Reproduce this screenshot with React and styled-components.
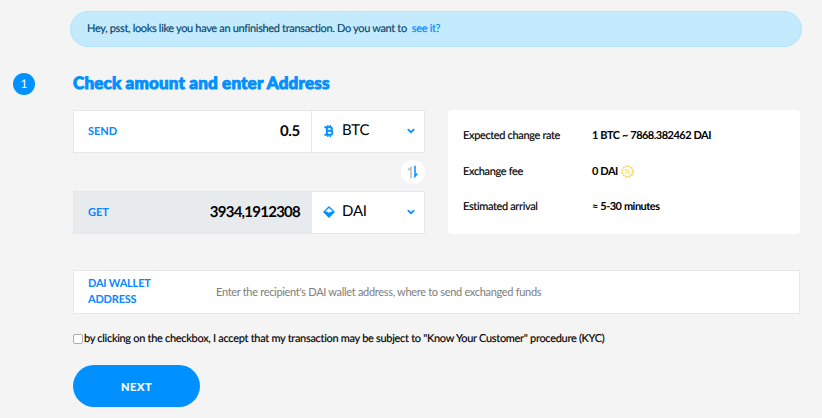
import { useState } from "react";
import styled, { createGlobalStyle } from "styled-components";

const GlobalStyle = createGlobalStyle`
  * {
    box-sizing: border-box;
  }
  body {
    margin: 0;
    background-color: #f4f4f4;
    font-family: Lato, "Noto Sans", sans-serif;
    color: #000;
    overflow: hidden;
    text-rendering: geometricPrecision;
  }
`;

const BitcoinIcon = () => (
  <svg width="12" height="12" viewBox="-1 0 12 12" fill="none" stroke="#0090ff">
    <path d="M3.9 0v2M6.3 0v2M3.9 10v2M6.3 10v2" strokeWidth="1.3" />
    <path
      d="M.4 2.3H6.2a1.7 1.7 0 0 1 0 3.5H3M6.4 5.8a1.95 1.95 0 0 1 0 3.9H.4M2.9 2.3v7.4"
      strokeWidth="1.9"
    />
  </svg>
);

const DaiIcon = () => (
  <svg width="12" height="12" viewBox="0 0 12 12">
    <path d="M6 0 12 6 6 12 0 6z" fill="#0090ff" />
    <path d="M6 1.9 9.8 5.6H8.1L6 6.7 3.9 5.6H2.2z" fill="#fff" />
  </svg>
);

const ChevronIcon = () => (
  <svg width="8" height="6" viewBox="0 0 8 6" fill="none">
    <path d="M1.3 1.6 4 4.2l2.7-2.6" stroke="#0090ff" strokeWidth="1.7" strokeLinecap="round" />
  </svg>
);

const SwapIcon = () => (
  <svg width="12" height="14" viewBox="0 0 12 14" fill="none">
    <path d="M1 5 4 2.8v10.4" stroke="#bcbcbc" strokeWidth="1.6" />
    <path d="M8 .8v10.6l2.3-2.8" stroke="#0090ff" strokeWidth="1.5" />
  </svg>
);

const PercentIcon = () => (
  <svg width="13" height="13" viewBox="0 0 13 13" fill="none" stroke="#ffd94a">
    <circle cx="6.5" cy="6.5" r="5.8" strokeWidth="1.2" strokeDasharray="1.9 1.14" />
    <circle cx="6.5" cy="6.5" r="5.1" strokeWidth=".8" />
    <path d="m4.5 8.9 4-4.8" strokeWidth="1" />
    <circle cx="4.7" cy="4.9" r=".8" strokeWidth=".8" />
    <circle cx="8.3" cy="8.1" r=".8" strokeWidth=".8" />
  </svg>
);

const rates = [
  { label: "Expected change rate", value: "1 BTC ~ 7868.382462 DAI" },
  { label: "Exchange fee", value: "0 DAI", icon: <PercentIcon /> },
  { label: "Estimated arrival", value: "≈ 5-30 minutes" },
];

const App = () => {
  const [accepted, setAccepted] = useState(false);

  return (
    <>
      <GlobalStyle />
      <Page>
        <Banner>
          <BannerText>
            Hey, psst, looks like you have an unfinished transaction. Do you want to
          </BannerText>
          <BannerLink href="#">see it?</BannerLink>
        </Banner>
        <Heading>
          <Step>1</Step>
          <Title>Check amount and enter Address</Title>
        </Heading>
        <Content>
          <Exchange>
            <Fields>
              <Field>
                <Amount>
                  <Label>SEND</Label>
                  <Value $spacing="-0.3px">0.5</Value>
                </Amount>
                <Currency>
                  <BitcoinIcon />
                  <Code>BTC</Code>
                  <ChevronIcon />
                </Currency>
              </Field>
              <SwapButton aria-label="Swap currencies">
                <SwapIcon />
              </SwapButton>
              <Field>
                <Amount $locked>
                  <Label>GET</Label>
                  <Value $spacing="-0.75px">3934,1912308</Value>
                </Amount>
                <Currency>
                  <DaiIcon />
                  <Code>DAI</Code>
                  <ChevronIcon />
                </Currency>
              </Field>
            </Fields>
            <Rates>
              {rates.map((rate) => (
                <Rate key={rate.label}>
                  <RateLabel>{rate.label}</RateLabel>
                  <RateValue>
                    {rate.value}
                    {rate.icon}
                  </RateValue>
                </Rate>
              ))}
            </Rates>
          </Exchange>
          <Wallet>
            <WalletLabel htmlFor="wallet">DAI WALLET ADDRESS</WalletLabel>
            <WalletInput
              id="wallet"
              placeholder="Enter the recipient's DAI wallet address, where to send exchanged funds"
            />
          </Wallet>
          <Terms>
            <Checkbox
              type="checkbox"
              checked={accepted}
              onChange={(e) => setAccepted(e.target.checked)}
            />
            <span>
              by clicking on the checkbox, I accept that my transaction may be subject to "Know
              Your Customer" procedure (KYC)
            </span>
          </Terms>
          <NextButton>NEXT</NextButton>
        </Content>
      </Page>
    </>
  );
};

export default App;

const Page = styled.main`
  width: 822px;
  height: 418px;
  padding-top: 11px;
`;
const Banner = styled.div`
  display: flex;
  align-items: center;
  gap: 5px;
  height: 36px;
  margin: 0 20px 0 70px;
  padding: 0 16px 1px;
  border: 1px solid #b5e1fc;
  border-radius: 18px;
  background-color: #c4eafe;
  font-size: 11px;
  letter-spacing: -0.34px;
`;
const BannerText = styled.span`
  color: #07456b;
  -webkit-text-stroke: 0.15px #07456b;
`;
const BannerLink = styled.a`
  color: #0090ff;
  text-decoration: none;
  -webkit-text-stroke: 0.2px #0090ff;
`;
const Heading = styled.header`
  display: flex;
  align-items: center;
  height: 22px;
  margin-top: 26px;
  padding-left: 13px;
`;
const Step = styled.span`
  display: grid;
  place-items: center;
  width: 22px;
  height: 22px;
  margin-right: 38px;
  padding-bottom: 1px;
  border-radius: 50%;
  background-color: #0090ff;
  color: white;
  font-size: 12px;
`;
const Title = styled.h1`
  margin: 0;
  padding-bottom: 3px;
  color: #0090ff;
  font-size: 17px;
  font-weight: 900;
  line-height: 22px;
  letter-spacing: 0.18px;
  white-space: nowrap;
  -webkit-text-stroke: 0.9px #0090ff;
`;
const Content = styled.div`
  padding: 15px 22px 0 73px;
`;
const Exchange = styled.section`
  display: flex;
  justify-content: space-between;
`;
const Fields = styled.div`
  display: flex;
  flex-direction: column;
  width: 352px;
`;
const Field = styled.div`
  display: flex;
  height: 43px;
  border: 1px solid #e5e7e8;
  background-color: white;
`;
const Amount = styled.div`
  display: flex;
  align-items: center;
  justify-content: space-between;
  width: 238px;
  padding: 0 11px 1px 14px;
  border-right: 1px solid #e5e7e8;
  background-color: ${({ $locked }) => ($locked ? "#e7ebee" : "white")};
`;
const Label = styled.span`
  color: #0b86ff;
  font-size: 11px;
  font-weight: 700;
`;
const Value = styled.span`
  font-size: 15px;
  font-weight: 700;
  letter-spacing: ${({ $spacing }) => $spacing};
`;
const Currency = styled.div`
  display: flex;
  flex: 1;
  align-items: center;
  padding: 0 9px 1px 11px;
`;
const Code = styled.span`
  margin: 0 auto 0 7px;
  padding-bottom: 3px;
  font-size: 15px;
  letter-spacing: -0.2px;
`;
const SwapButton = styled.button`
  display: grid;
  place-items: center;
  align-self: flex-end;
  width: 24px;
  height: 24px;
  margin: 7px 0;
  padding: 0;
  border: none;
  border-radius: 50%;
  background-color: white;
`;
const Rates = styled.div`
  display: flex;
  flex-direction: column;
  justify-content: space-between;
  width: 352px;
  height: 124px;
  padding: 17px 15px 18px;
  border-radius: 4px;
  background-color: white;
`;
const Rate = styled.div`
  display: flex;
  align-items: center;
  height: 18px;
  padding-bottom: 1px;
  font-size: 11px;
`;
const RateLabel = styled.span`
  width: 129px;
  letter-spacing: -0.35px;
  -webkit-text-stroke: 0.15px #000;
`;
const RateValue = styled.span`
  display: flex;
  align-items: center;
  gap: 3px;
  font-weight: 700;
  letter-spacing: -0.52px;
  word-spacing: 0.3px;
`;
const Wallet = styled.div`
  display: flex;
  align-items: center;
  height: 44px;
  margin-top: 36px;
  border: 1px solid #e5e7e8;
  background-color: white;
`;
const WalletLabel = styled.label`
  width: 131px;
  padding: 0 40px 1px 14px;
  color: #0b86ff;
  font-size: 11px;
  font-weight: 700;
  line-height: 16px;
  letter-spacing: -0.2px;
`;
const WalletInput = styled.input`
  flex: 1;
  height: 40px;
  padding: 0 11px 2px;
  border: none;
  outline: none;
  font-family: inherit;
  font-size: 11px;
  letter-spacing: -0.31px;

  &::placeholder {
    color: #7d7d7d;
  }
`;
const Terms = styled.label`
  display: flex;
  align-items: center;
  gap: 1px;
  height: 16px;
  margin-top: 17px;
  font-size: 11px;
  letter-spacing: -0.3px;
  white-space: nowrap;
  -webkit-text-stroke: 0.15px #000;

  span {
    padding-bottom: 1px;
  }
`;
const Checkbox = styled.input`
  appearance: none;
  width: 10px;
  height: 10px;
  margin: 0;
  border: 1px solid #adadad;
  border-radius: 2px;
  background-color: white;

  &:checked {
    background-color: #0090ff;
  }
`;
const NextButton = styled.button`
  width: 127px;
  height: 42px;
  margin-top: 18px;
  padding: 0;
  border: none;
  border-radius: 21px;
  background-color: #0090ff;
  color: white;
  font-family: inherit;
  font-size: 11px;
  font-weight: 700;
  letter-spacing: 0.6px;
  -webkit-text-stroke: 0.2px white;
`;
